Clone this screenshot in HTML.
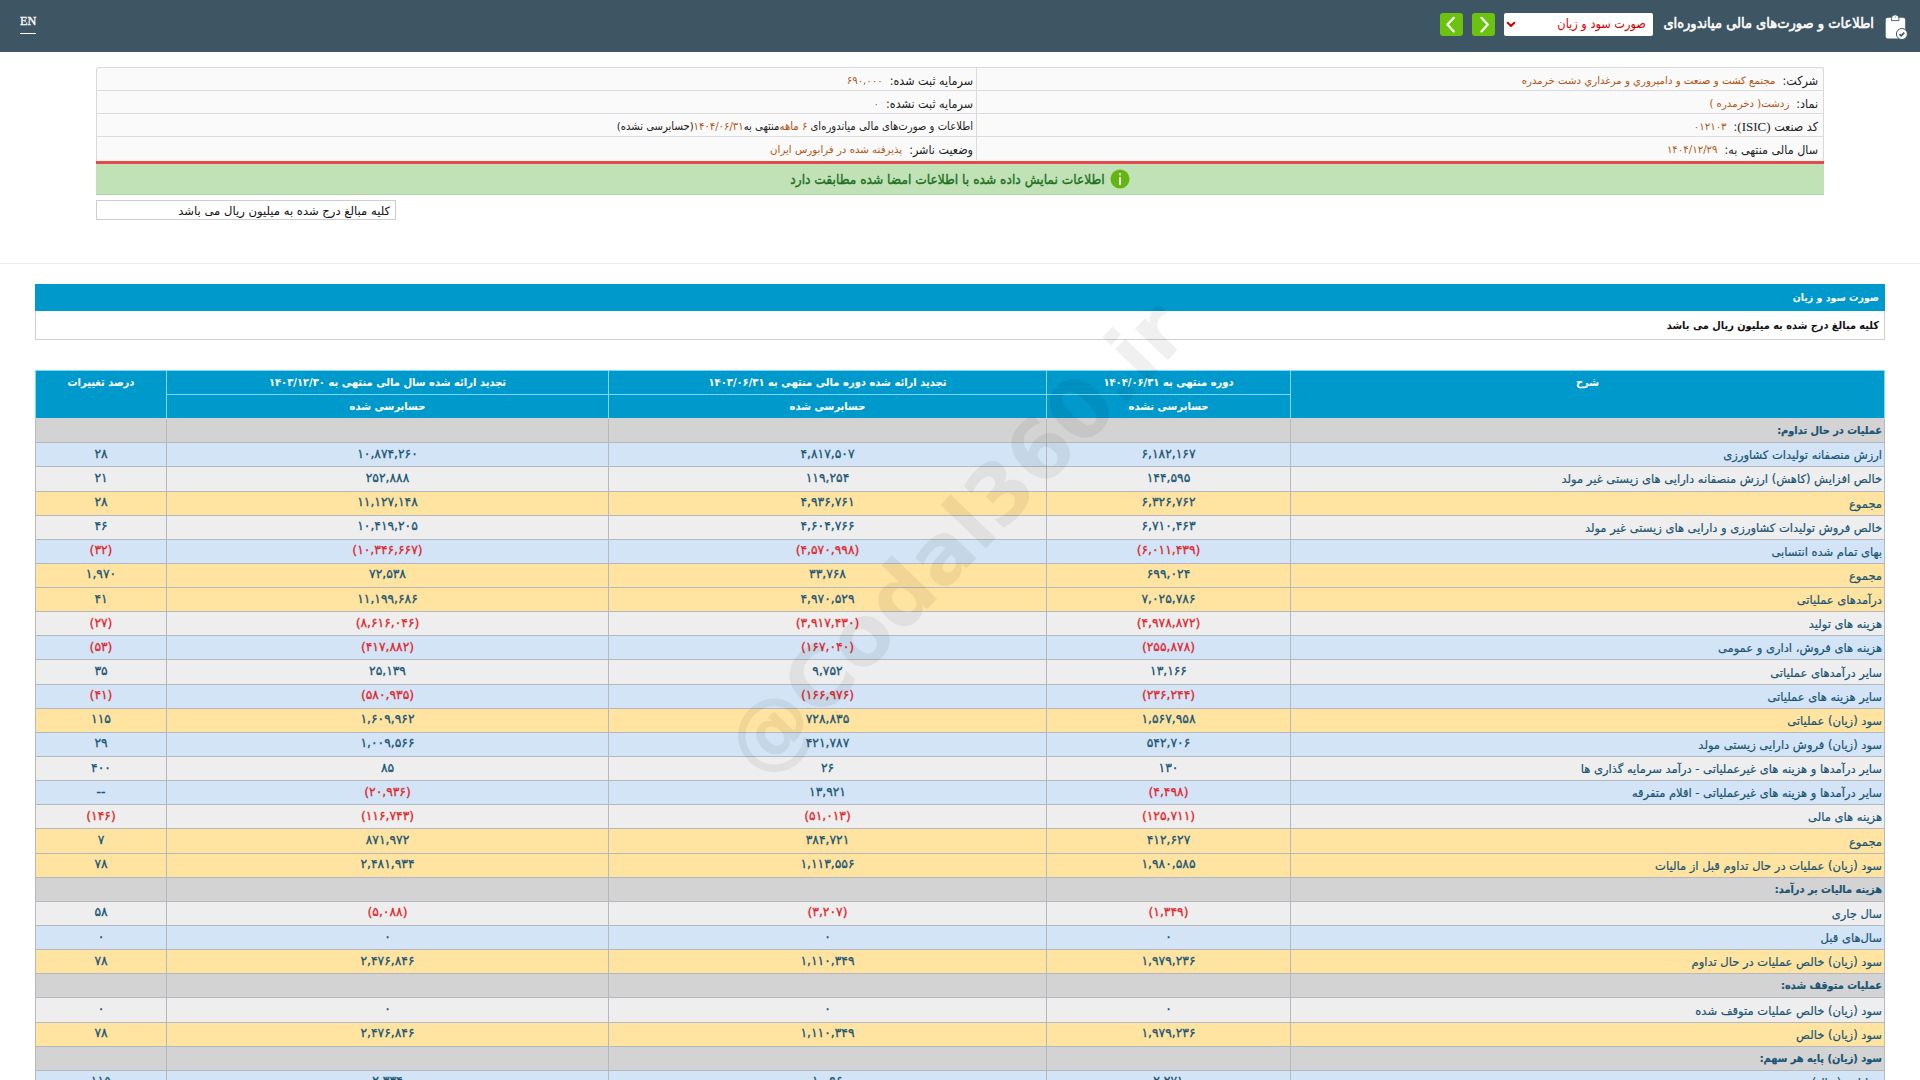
<!DOCTYPE html>
<html lang="fa" dir="rtl">
<head>
<meta charset="utf-8">
<title>اطلاعات و صورت‌های مالی میاندوره‌ای</title>
<style>
*{box-sizing:border-box;margin:0;padding:0}
html,body{width:1920px;height:1080px;overflow:hidden;background:#fff}
body{font-family:"Liberation Sans","DejaVu Sans",sans-serif;position:relative;direction:rtl}
.ar{font-family:"DejaVu Sans",sans-serif}
.arc{font-family:"DejaVu Sans Condensed","DejaVu Sans",sans-serif}
.lat{font-family:"Liberation Serif",serif}
/* header */
.hdr{position:absolute;left:0;top:0;width:1920px;height:52px;background:#3e5564}
.hdr .ttl{position:absolute;right:46px;top:12px;height:23px;line-height:23px;color:#fff;font-size:14.5px;white-space:nowrap;font-family:"DejaVu Sans Condensed","DejaVu Sans",sans-serif;-webkit-text-stroke:0.55px #fff}
.hdr .ico{position:absolute;left:1880px;top:10px;width:30px;height:32px}
.hdr .sel{position:absolute;left:1504px;top:13px;width:149px;height:23px;background:#fff;border-radius:2px;color:#d40000;font-size:12.6px;line-height:22px;padding-right:7px;white-space:nowrap;font-family:"DejaVu Sans Condensed","DejaVu Sans",sans-serif}
.hdr .sel svg{position:absolute;left:2px;top:8px}
.hdr .btn{position:absolute;top:13px;width:23px;height:23px;background:#6bc20f;border-radius:3px}
.hdr .en{position:absolute;left:20px;top:13px;color:#fff;font-size:12.3px;line-height:16px;border-bottom:1px solid #fff;padding-bottom:4px;direction:ltr;-webkit-text-stroke:0.3px}
/* info */
.info{position:absolute;left:96px;top:67px;width:1728px;height:94px;border:1px solid #d9d9d9;border-bottom:none;background:#fafafa;border-radius:3px 3px 0 0}
.info .row{position:absolute;left:0;right:0;height:23px;border-bottom:1px solid #dcdcdc}
.info .cell{position:absolute;top:0;height:100%;white-space:nowrap;font-size:12.4px;color:#222;line-height:26px;font-family:"DejaVu Sans Condensed","DejaVu Sans",sans-serif}
.info .c1{right:0;width:847px;padding-right:5px}
.info .c2{left:0;width:880px;padding-right:3px;border-right:1px solid #dcdcdc}
.info .v{color:#b4530f;font-size:10.2px;margin-right:7px;position:relative;top:-1px;font-family:"DejaVu Sans",sans-serif}
.redline{position:absolute;left:96px;top:161px;width:1728px;height:3px;background:#ea4848}
.green{position:absolute;left:96px;top:164px;width:1728px;height:31px;background:#c1e2b7;border-bottom:1px solid #b5d3ab;color:#1e701e;font-size:13.6px;-webkit-text-stroke:0.35px;text-align:center;line-height:30px;white-space:nowrap}
.note{position:absolute;left:96px;top:200px;width:300px;height:20px;border:1px solid #cdcdcd;background:#fff;font-size:11.6px;color:#111;line-height:20px;padding-right:5px;white-space:nowrap}
.sep{position:absolute;left:0;top:263px;width:1920px;height:1px;background:#ececec}
/* section title */
.bar{position:absolute;left:35px;top:284px;width:1850px;height:27px;background:#0099cc;color:#fff;font-weight:bold;font-size:10.5px;line-height:27px;padding-right:6px;white-space:nowrap}
.sub{position:absolute;left:35px;top:311px;width:1850px;height:29px;border:1px solid #cfcfcf;border-top:none;background:#fff;color:#111;font-weight:bold;font-size:10.9px;line-height:29px;padding-right:5px;white-space:nowrap}
/* table */
table{position:absolute;left:35px;top:370.4px;width:1849px;border-collapse:collapse;table-layout:fixed;font-size:11.5px}
th{background:#0099cc;color:#fff;font-weight:bold;font-size:11.1px;height:23.85px;border:1px solid #7fd6fa;vertical-align:top;line-height:21px;padding-top:1px;white-space:nowrap;text-align:center;font-family:"DejaVu Sans Condensed","DejaVu Sans",sans-serif}
td{height:24.154px;border:1px solid #b3b9be;white-space:nowrap;color:#1a5574;line-height:20px;padding:1px 2px 0 2px;overflow:hidden;-webkit-text-stroke:0.2px}
td.n{text-align:center;font-size:12.3px;font-family:"DejaVu Sans",sans-serif;direction:ltr;-webkit-text-stroke:0.3px;padding:0 2px 2px 2px}
td.r{color:#e0262c}
th.lb{border-bottom-color:#d3d3d3}
tr.b td{background:#d2e4f6}
tr.g td{background:#eeeeee}
tr.y td{background:#ffe3a0}
tr.s td{background:#d3d3d3}
tr.s td.l{font-weight:bold;font-size:10.9px;font-family:"DejaVu Sans Condensed","DejaVu Sans",sans-serif}
.wm{position:absolute;left:956px;top:539px;width:0;height:0;z-index:5;pointer-events:none}
.wm span{position:absolute;left:-400px;top:-60px;width:800px;height:120px;line-height:120px;text-align:center;font-family:"DejaVu Sans",sans-serif;font-weight:bold;font-size:83px;color:rgba(0,0,0,0.06);transform:rotate(-46deg);direction:ltr;white-space:nowrap}
</style>
</head>
<body>
<div class="hdr">
  <div class="en lat">EN</div>
  <div class="btn" style="left:1440px"><svg width="23" height="23" viewBox="0 0 23 23"><path d="M13.8 4.8 L7.4 11.6 L13.8 18.400" fill="none" stroke="#fff" stroke-width="2.200" stroke-linecap="round" stroke-linejoin="round"/></svg></div>
  <div class="btn" style="left:1472px"><svg width="23" height="23" viewBox="0 0 23 23"><path d="M9.400 4.800 L15.800 11.600 L9.400 18.400" fill="none" stroke="#fff" stroke-width="2.200" stroke-linecap="round" stroke-linejoin="round"/></svg></div>
  <div class="sel ar">صورت سود و زیان<svg width="10" height="8" viewBox="0 0 10 8"><path d="M1.700 1.700 L5 5 L8.300 1.700" fill="none" stroke="#d40000" stroke-width="2" stroke-linecap="round" stroke-linejoin="round"/></svg></div>
  <div class="ttl ar">اطلاعات و صورت‌های مالی میاندوره‌ای</div>
  <svg class="ico" viewBox="1880 10 30 32"><rect x="1885.700" y="17.800" width="19.500" height="20.800" rx="2" fill="#fff"/><path d="M1891.500 20.600 V18.300 Q1891.500 14.800 1895.200 14.800 Q1898.900 14.800 1898.900 18.300 V20.600 Z" fill="#fff" stroke="#3e5564" stroke-width="0.900"/><path d="M1894.500 17.500 L1895.200 16.300 L1895.900 17.500 Z" fill="#3e5564"/><circle cx="1901.900" cy="34" r="5.500" fill="#fff" stroke="#3e5564" stroke-width="1"/><path d="M1899.600 34.200 l1.600 1.600 l3.100 -3.200" fill="none" stroke="#3e5564" stroke-width="1.700"/></svg>
</div>

<div class="info ar">
  <div class="row" style="top:0">
    <div class="cell c1">شرکت:<span class="v">مجتمع کشت و صنعت و دامپروري و مرغداري دشت خرمدره</span></div>
    <div class="cell c2">سرمایه ثبت شده:<span class="v">۶۹۰,۰۰۰</span></div>
  </div>
  <div class="row" style="top:23px">
    <div class="cell c1">نماد:<span class="v">زدشت( دخرمدره )</span></div>
    <div class="cell c2">سرمایه ثبت نشده:<span class="v">۰</span></div>
  </div>
  <div class="row" style="top:46px">
    <div class="cell c1">کد صنعت <span class="lat" style="font-size:13px">(ISIC)</span>:<span class="v">۰۱۲۱۰۳</span></div>
    <div class="cell c2"><span style="font-size:11.2px;position:relative;top:-1px">اطلاعات و صورت‌های مالی میاندوره‌ای <span style="color:#b4530f">۶ ماهه</span>&zwnj;منتهی به<span style="color:#b4530f">۱۴۰۴/۰۶/۳۱</span>(حسابرسی نشده)</span></div>
  </div>
  <div class="row" style="top:69px;border-bottom:none">
    <div class="cell c1">سال مالی منتهی به:<span class="v">۱۴۰۴/۱۲/۲۹</span></div>
    <div class="cell c2">وضعیت ناشر:<span class="v">پذیرفته شده در فرابورس ایران</span></div>
  </div>
</div>
<div class="redline"></div>
<div class="green arc"><svg width="20" height="20" viewBox="0 0 21 21" style="vertical-align:middle;margin-left:5px;position:relative;top:-1px"><circle cx="10.500" cy="10.500" r="10" fill="#63b512"/><circle cx="10.500" cy="5.600" r="1.200" fill="#fff"/><rect x="9.500" y="8.300" width="2" height="8.500" rx="1" fill="#fff"/></svg>اطلاعات نمایش داده شده با اطلاعات امضا شده مطابقت دارد</div>
<div class="note ar">کلیه مبالغ درج شده به میلیون ریال می باشد</div>
<div class="sep"></div>

<div class="bar arc">صورت سود و زیان</div>
<div class="sub arc">کلیه مبالغ درج شده به میلیون ریال می باشد</div>

<table class="ar">
<colgroup><col style="width:594px"><col style="width:244px"><col style="width:438px"><col style="width:442px"><col style="width:131px"></colgroup>
<thead>
<tr><th rowspan="2" class="lb">شرح</th><th>دوره منتهی به ۱۴۰۴/۰۶/۳۱</th><th>تجدید ارائه شده دوره مالی منتهی به ۱۴۰۳/۰۶/۳۱</th><th>تجدید ارائه شده سال مالی منتهی به ۱۴۰۳/۱۲/۳۰</th><th rowspan="2" class="lb">درصد تغییرات</th></tr>
<tr><th class="lb">حسابرسی نشده</th><th class="lb">حسابرسی شده</th><th class="lb">حسابرسی شده</th></tr>
</thead>
<tbody>
<tr class="s"><td class="l">عملیات در حال تداوم:</td><td></td><td></td><td></td><td></td></tr>
<tr class="b"><td class="l">ارزش منصفانه تولیدات کشاورزی</td><td class="n">۶,۱۸۲,۱۶۷</td><td class="n">۴,۸۱۷,۵۰۷</td><td class="n">۱۰,۸۷۴,۲۶۰</td><td class="n">۲۸</td></tr>
<tr class="g"><td class="l">خالص افزایش (کاهش) ارزش منصفانه دارایی های زیستی غیر مولد</td><td class="n">۱۴۴,۵۹۵</td><td class="n">۱۱۹,۲۵۴</td><td class="n">۲۵۲,۸۸۸</td><td class="n">۲۱</td></tr>
<tr class="y"><td class="l">مجموع</td><td class="n">۶,۳۲۶,۷۶۲</td><td class="n">۴,۹۳۶,۷۶۱</td><td class="n">۱۱,۱۲۷,۱۴۸</td><td class="n">۲۸</td></tr>
<tr class="g"><td class="l">خالص فروش تولیدات کشاورزی و دارایی های زیستی غیر مولد</td><td class="n">۶,۷۱۰,۴۶۳</td><td class="n">۴,۶۰۴,۷۶۶</td><td class="n">۱۰,۴۱۹,۲۰۵</td><td class="n">۴۶</td></tr>
<tr class="b"><td class="l">بهای تمام شده انتسابی</td><td class="n r">(۶,۰۱۱,۴۳۹)</td><td class="n r">(۴,۵۷۰,۹۹۸)</td><td class="n r">(۱۰,۳۴۶,۶۶۷)</td><td class="n r">(۳۲)</td></tr>
<tr class="y"><td class="l">مجموع</td><td class="n">۶۹۹,۰۲۴</td><td class="n">۳۳,۷۶۸</td><td class="n">۷۲,۵۳۸</td><td class="n">۱,۹۷۰</td></tr>
<tr class="y"><td class="l">درآمدهای عملیاتی</td><td class="n">۷,۰۲۵,۷۸۶</td><td class="n">۴,۹۷۰,۵۲۹</td><td class="n">۱۱,۱۹۹,۶۸۶</td><td class="n">۴۱</td></tr>
<tr class="g"><td class="l">هزینه های تولید</td><td class="n r">(۴,۹۷۸,۸۷۲)</td><td class="n r">(۳,۹۱۷,۴۳۰)</td><td class="n r">(۸,۶۱۶,۰۴۶)</td><td class="n r">(۲۷)</td></tr>
<tr class="b"><td class="l">هزینه های فروش، اداری و عمومی</td><td class="n r">(۲۵۵,۸۷۸)</td><td class="n r">(۱۶۷,۰۴۰)</td><td class="n r">(۴۱۷,۸۸۲)</td><td class="n r">(۵۳)</td></tr>
<tr class="g"><td class="l">سایر درآمدهای عملیاتی</td><td class="n">۱۳,۱۶۶</td><td class="n">۹,۷۵۲</td><td class="n">۲۵,۱۳۹</td><td class="n">۳۵</td></tr>
<tr class="b"><td class="l">سایر هزینه های عملیاتی</td><td class="n r">(۲۳۶,۲۴۴)</td><td class="n r">(۱۶۶,۹۷۶)</td><td class="n r">(۵۸۰,۹۳۵)</td><td class="n r">(۴۱)</td></tr>
<tr class="y"><td class="l">سود (زیان) عملیاتی</td><td class="n">۱,۵۶۷,۹۵۸</td><td class="n">۷۲۸,۸۳۵</td><td class="n">۱,۶۰۹,۹۶۲</td><td class="n">۱۱۵</td></tr>
<tr class="b"><td class="l">سود (زیان) فروش دارایی زیستی مولد</td><td class="n">۵۴۲,۷۰۶</td><td class="n">۴۲۱,۷۸۷</td><td class="n">۱,۰۰۹,۵۶۶</td><td class="n">۲۹</td></tr>
<tr class="g"><td class="l">سایر درآمدها و هزینه های غیرعملیاتی - درآمد سرمایه گذاری ها</td><td class="n">۱۳۰</td><td class="n">۲۶</td><td class="n">۸۵</td><td class="n">۴۰۰</td></tr>
<tr class="b"><td class="l">سایر درآمدها و هزینه های غیرعملیاتی - اقلام متفرقه</td><td class="n r">(۴,۴۹۸)</td><td class="n">۱۳,۹۲۱</td><td class="n r">(۲۰,۹۳۶)</td><td class="n">--</td></tr>
<tr class="g"><td class="l">هزینه های مالی</td><td class="n r">(۱۲۵,۷۱۱)</td><td class="n r">(۵۱,۰۱۳)</td><td class="n r">(۱۱۶,۷۴۳)</td><td class="n r">(۱۴۶)</td></tr>
<tr class="y"><td class="l">مجموع</td><td class="n">۴۱۲,۶۲۷</td><td class="n">۳۸۴,۷۲۱</td><td class="n">۸۷۱,۹۷۲</td><td class="n">۷</td></tr>
<tr class="y"><td class="l">سود (زیان) عملیات در حال تداوم قبل از مالیات</td><td class="n">۱,۹۸۰,۵۸۵</td><td class="n">۱,۱۱۳,۵۵۶</td><td class="n">۲,۴۸۱,۹۳۴</td><td class="n">۷۸</td></tr>
<tr class="s"><td class="l">هزینه مالیات بر درآمد:</td><td></td><td></td><td></td><td></td></tr>
<tr class="g"><td class="l">سال جاری</td><td class="n r">(۱,۳۴۹)</td><td class="n r">(۳,۲۰۷)</td><td class="n r">(۵,۰۸۸)</td><td class="n">۵۸</td></tr>
<tr class="b"><td class="l">سال‌های قبل</td><td class="n">۰</td><td class="n">۰</td><td class="n">۰</td><td class="n">۰</td></tr>
<tr class="y"><td class="l">سود (زیان) خالص عملیات در حال تداوم</td><td class="n">۱,۹۷۹,۲۳۶</td><td class="n">۱,۱۱۰,۳۴۹</td><td class="n">۲,۴۷۶,۸۴۶</td><td class="n">۷۸</td></tr>
<tr class="s"><td class="l">عملیات متوقف شده:</td><td></td><td></td><td></td><td></td></tr>
<tr class="g"><td class="l">سود (زیان) خالص عملیات متوقف شده</td><td class="n">۰</td><td class="n">۰</td><td class="n">۰</td><td class="n">۰</td></tr>
<tr class="y"><td class="l">سود (زیان) خالص</td><td class="n">۱,۹۷۹,۲۳۶</td><td class="n">۱,۱۱۰,۳۴۹</td><td class="n">۲,۴۷۶,۸۴۶</td><td class="n">۷۸</td></tr>
<tr class="s"><td class="l">سود (زیان) پایه هر سهم:</td><td></td><td></td><td></td><td></td></tr>
<tr class="b"><td class="l">عملیاتی (ریال)</td><td class="n">۲,۲۷۱</td><td class="n">۱,۰۹۶</td><td class="n">۲,۳۳۴</td><td class="n">۱۱۵</td></tr>
</tbody>
</table>
<div class="wm"><span>@Codal360.ir</span></div>
</body>
</html>
